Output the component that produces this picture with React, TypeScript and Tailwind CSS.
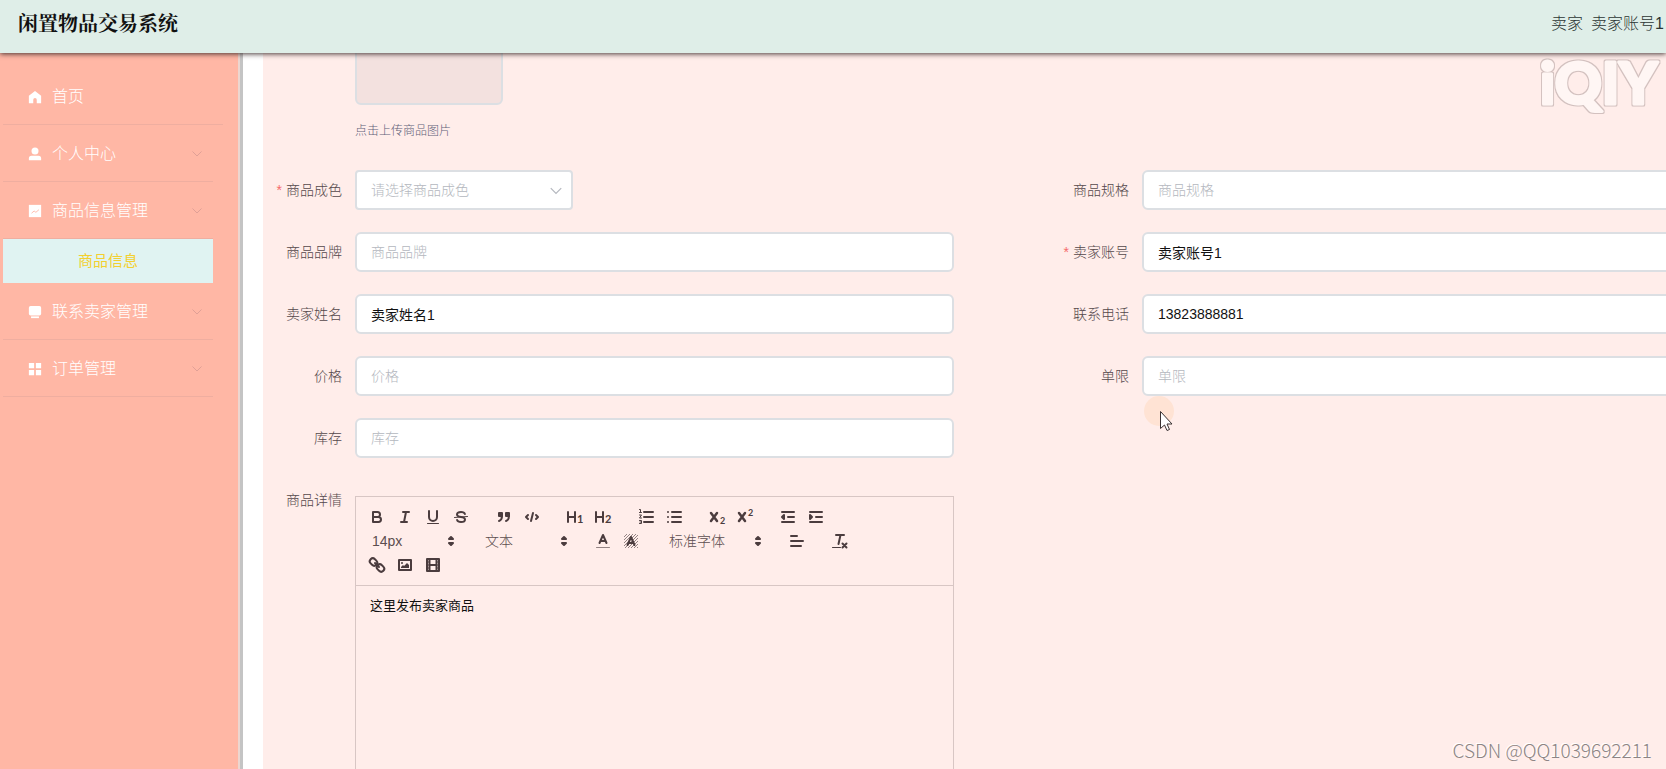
import React, { useState } from 'react';

interface MenuItem {
    label: string;
    icon: React.ReactNode;
    children?: string[];
    open?: boolean;
}

interface FieldProps {
    id: string;
    label: string;
    value?: string;
    required?: boolean;
}

const menu: MenuItem[] = [
    {
        label: '首页',
        icon: <path d="M8 1 1 6.500V15h5v-4a2 2 0 0 1 4 0v4h5V6.500z" />,
    },
    {
        label: '个人中心',
        icon: (
            <>
                <circle cx="8" cy="4.500" r="4" />
                <path d="M1 15v-2a3 3 0 0 1 3-3h8a3 3 0 0 1 3 3v2z" />
            </>
        ),
        children: [],
    },
    {
        label: '商品信息管理',
        icon: (
            <>
                <rect x="1" y="1" width="14" height="14" />
                <path d="M4 10.500 7 8l2 1.500 3.500-3" fill="none" stroke="#ffb7a5" />
            </>
        ),
        children: ['商品信息'],
        open: true,
    },
    {
        label: '联系卖家管理',
        icon: (
            <>
                <rect x="1" y="1" width="14" height="11" rx="2" />
                <path d="M3.500 13h9v2h-9z" />
            </>
        ),
        children: [],
    },
    {
        label: '订单管理',
        icon: <path d="M1 1h6v6H1zM9 1h6v6H9zM1 9h6v6H1zM9 9h6v6H9z" />,
        children: [],
    },
];

const Chevron = ({ className }: { className: string }) => (
    <svg viewBox="0 0 12 12" className={className} fill="none" stroke="currentColor">
        <path d="M1.500 3.500 6 8l4.500-4.500" />
    </svg>
);

const Sidebar = () => (
    <aside className="w-[243px] shrink-0 border-r-[3px] border-[#c4c4c4] bg-[#ffb7a5] pt-[15px] pl-[3px] shadow-[inset_-2px_0_0_#ecd6d0]">
        <nav>
            {menu.map((item) => (
                <div key={item.label} className={item.children ? 'w-[210px]' : 'w-[220px]'}>
                    <button className="flex h-[57px] w-full items-center border-b border-[#efaea0] pt-px pr-2.5 pl-[25px] text-base font-light text-white">
                        <svg viewBox="0 0 16 16" className="mr-2.5 h-3.5 w-3.5" fill="currentColor">
                            {item.icon}
                        </svg>
                        {item.label}
                        {item.children && <Chevron className="ml-auto h-3 w-3 text-[#e0a096]" />}
                    </button>
                    {item.open &&
                        item.children?.map((child) => (
                            <a
                                key={child}
                                href="#goods"
                                className="flex h-11 items-center justify-center bg-[#e0f3f2] text-[15px] text-[#f3d02f]"
                            >
                                {child}
                            </a>
                        ))}
                </div>
            ))}
        </nav>
    </aside>
);

const Label = ({ id, label, required }: FieldProps) => (
    <label
        htmlFor={id}
        className="flex h-10 w-20 shrink-0 items-center justify-end pr-[13px] text-sm font-light whitespace-nowrap text-[#54484a]"
    >
        {required && <span className="mr-1 text-[#f56c6c]">*</span>}
        {label}
    </label>
);

const Field = (props: FieldProps) => (
    <div className="flex pr-[108px]">
        <Label {...props} />
        <input
            id={props.id}
            defaultValue={props.value}
            placeholder={props.label}
            className="h-10 min-w-0 flex-1 rounded-md border-2 border-[#dcdfe3] bg-white px-3.5 text-sm text-[#111] placeholder:font-light placeholder:text-[#b4b7be]"
        />
    </div>
);

const Group = ({ children }: { children: React.ReactNode }) => (
    <div className="mr-[15px] flex h-6">{children}</div>
);

const Tool = ({ title, children }: { title: string; children: React.ReactNode }) => (
    <button type="button" title={title} className="flex h-6 w-7 items-center justify-center">
        <svg
            viewBox="0 0 18 18"
            className="h-[18px] w-[18px] overflow-visible"
            fill="none"
            stroke="currentColor"
            strokeWidth="2"
            strokeLinecap="round"
            strokeLinejoin="round"
        >
            {children}
        </svg>
    </button>
);

// letters inside toolbar icons
const Glyph = ({ x, y, size, children }: { x: number; y: number; size: number; children: string }) => (
    <text x={x} y={y} fontSize={size} fontWeight="700" fontFamily="Lato, sans-serif" fill="currentColor" stroke="none">
        {children}
    </text>
);

const Picker = ({ label, wide }: { label: string; wide?: boolean }) => (
    <div className={wide ? 'relative w-[108px]' : 'relative w-[98px]'}>
        <select
            aria-label={label}
            className="h-6 w-full appearance-none pl-[9px] text-sm font-light text-[#5c4d4f]"
        >
            <option>{label}</option>
        </select>
        <svg
            viewBox="0 0 18 18"
            className="pointer-events-none absolute top-[3px] right-px h-[18px] w-[18px]"
            fill="currentColor"
            stroke="currentColor"
            strokeWidth="2"
            strokeLinejoin="round"
        >
            <path d="M7 11 9 13 11 11zM7 7 9 5 11 7z" />
        </svg>
    </div>
);

const Toolbar = () => (
    <div className="flex flex-wrap border-b border-[#d8c6c4] px-[7px] py-2 text-[#4b3c3e]">
        <Group>
            <Tool title="加粗">
                <path d="M5 4h4.500a2.500 2.500 0 0 1 0 5H5zM5 9h5.500a2.500 2.500 0 0 1 0 5H5z" />
            </Tool>
            <Tool title="斜体">
                <path d="M7 4h6M5 14h6M8 14 10 4" />
            </Tool>
            <Tool title="下划线">
                <path d="M5 3v6a4 4 0 0 0 8 0V3" />
                <path d="M3.500 15.500h11" strokeWidth="1" />
            </Tool>
            <Tool title="删除线">
                <path d="M15.500 8.500l-13 1" strokeWidth="1" />
                <path d="M12.900 6C12.500 4.800 10.900 4 9 4 6.800 4 5 5.100 5 6.500c0 1.600 1.400 2.200 4 2.500s4 .9 4 2.500c0 1.400-1.800 2.500-4 2.500-1.900 0-3.500-.8-3.900-2" />
            </Tool>
        </Group>
        <Group>
            <Tool title="引用">
                <path d="M4 5h3v3H4zM11 5h3v3h-3z" fill="currentColor" />
                <path d="M7 8c0 4-3 5-3 5M14 8c0 4-3 5-3 5" />
            </Tool>
            <Tool title="代码">
                <path d="M5 7 3 9l2 2M13 7l2 2-2 2M10 5 8 13" />
            </Tool>
        </Group>
        <Group>
            <Tool title="标题1">
                <path d="M2 4v10M9 4v10M2 9h7" />
                <Glyph x={11} y={15} size={11}>1</Glyph>
            </Tool>
            <Tool title="标题2">
                <path d="M2 4v10M9 4v10M2 9h7" />
                <Glyph x={11} y={15} size={11}>2</Glyph>
            </Tool>
        </Group>
        <Group>
            <Tool title="有序列表">
                <path d="M7 4h9M7 9h9M7 14h9" />
                <path d="M2.500 1.500h1v3M2.500 4.500h2M2.500 7h2l-2 3h2M2.500 12.500h2v3h-2M3 14h1.500" strokeWidth="1" />
            </Tool>
            <Tool title="无序列表">
                <path d="M7 4h9M7 9h9M7 14h9M3 4h0M3 9h0M3 14h0" />
            </Tool>
        </Group>
        <Group>
            <Tool title="下标">
                <path d="m3 5 6 8M9 5l-6 8" strokeWidth="2.500" />
                <Glyph x={12} y={16} size={9}>2</Glyph>
            </Tool>
            <Tool title="上标">
                <path d="m3 5 6 8M9 5l-6 8" strokeWidth="2.500" />
                <Glyph x={12} y={8} size={9}>2</Glyph>
            </Tool>
        </Group>
        <Group>
            <Tool title="减少缩进">
                <path d="M3 4h12M3 14h12M9 9h6" />
                <path d="M5 7v4L3 9z" fill="currentColor" />
            </Tool>
            <Tool title="增加缩进">
                <path d="M3 4h12M3 14h12M9 9h6" />
                <path d="M3 7v4l2-2z" fill="currentColor" />
            </Tool>
        </Group>
        <Group>
            <Picker label="14px" />
        </Group>
        <Group>
            <Picker label="文本" />
        </Group>
        <Group>
            <Tool title="文字颜色">
                <path d="M2.500 15.500h13" strokeWidth="1" opacity="0.600" />
                <path d="M5.500 11 9 3l3.500 8M6.500 9h5" />
            </Tool>
            <Tool title="背景颜色">
                <path
                    d="M2 5l3-3M2 8l6-6M2 11l9-9M2 14 14 2M3 16 16 3M6 16 16 6M9 16l7-7M12 16l4-4M15 16l1-1"
                    strokeWidth="1"
                    strokeLinecap="butt"
                    opacity="0.600"
                />
                <path d="M5.500 13 9 5l3.500 8M6.500 11h5" />
            </Tool>
        </Group>
        <Group>
            <Picker label="标准字体" wide />
        </Group>
        <Group>
            <Tool title="对齐">
                <path d="M3 9h12M3 14h10M3 4h6" />
            </Tool>
        </Group>
        <Group>
            <Tool title="清除格式">
                <path d="M5 3h8M9.500 3 7.500 12" />
                <path d="M1.500 15.500h8" strokeWidth="1" />
                <path d="m11.500 11.500 4 4M15.500 11.500l-4 4" />
            </Tool>
        </Group>
        <Group>
            <Tool title="链接">
                <rect x="1.500" y="3" width="8" height="6" rx="3" transform="rotate(45 5.500 6)" />
                <rect x="8.500" y="9" width="8" height="6" rx="3" transform="rotate(45 12.500 12)" />
                <path d="m7 7 4 4" />
            </Tool>
            <Tool title="图片">
                <rect x="3" y="4" width="12" height="10" />
                <circle cx="6" cy="7" r="1" fill="currentColor" stroke="none" />
                <path d="M5 12v-1l2-2 1 1 3-3 2 2v3z" fill="currentColor" stroke="none" />
            </Tool>
            <Tool title="视频">
                <rect x="3" y="3" width="12" height="12" />
                <path d="M5.500 3v12M12.500 3v12M6 9h6" />
                <path d="M3 6h2M3 9h2M3 12h2M13 6h2M13 9h2M13 12h2" strokeWidth="1" />
            </Tool>
        </Group>
    </div>
);

const GoodsForm = () => {
    const [condition, setCondition] = useState('');
    const [detail, setDetail] = useState('这里发布卖家商品');

    return (
        <form className="-mt-24 w-[1574px] min-w-full">
            <div className="pl-20">
                <button
                    type="button"
                    aria-label="上传商品图片"
                    className="block h-[148px] w-[148px] rounded-md border-2 border-[#dcdfe3] bg-[#f3e1df]"
                />
                <p className="mt-[17px] mb-[30px] text-xs leading-[18px] font-light text-[#606078]">点击上传商品图片</p>
            </div>
            <div className="grid grid-cols-2 gap-y-[22px]">
                <div className="flex">
                    <Label id="condition" label="商品成色" required />
                    <div className="relative w-[218px]">
                        <select
                            id="condition"
                            value={condition}
                            onChange={(e) => setCondition(e.target.value)}
                            className="h-10 w-full appearance-none rounded border-2 border-[#dcdfe3] bg-white px-3.5 text-sm font-light text-[#b4b7be]"
                        >
                            <option value="">请选择商品成色</option>
                            <option>全新</option>
                        </select>
                        <Chevron className="pointer-events-none absolute top-3.5 right-2.5 h-3.5 w-3.5 text-[#b4b7be]" />
                    </div>
                </div>
                <Field id="spec" label="商品规格" />
                <Field id="brand" label="商品品牌" />
                <Field id="account" label="卖家账号" value="卖家账号1" required />
                <Field id="seller" label="卖家姓名" value="卖家姓名1" />
                <Field id="phone" label="联系电话" value="13823888881" />
                <Field id="price" label="价格" />
                <Field id="limit" label="单限" />
                <Field id="stock" label="库存" />
                <div className="col-start-1 flex pr-[108px]">
                    <Label id="detail" label="商品详情" />
                    <div className="mt-4 min-w-0 flex-1 border border-[#d8c6c4]">
                        <Toolbar />
                        <textarea
                            id="detail"
                            value={detail}
                            onChange={(e) => setDetail(e.target.value)}
                            className="block h-[300px] w-full resize-none px-3.5 py-[11px] text-[13px] leading-[18px] text-[#111]"
                        />
                    </div>
                </div>
            </div>
        </form>
    );
};

export default function App() {
    return (
        <div className="relative flex h-screen flex-col overflow-hidden bg-white font-['Liberation_Sans','Noto_Sans_CJK_SC',sans-serif]">
            <header className="z-10 flex h-[53px] shrink-0 items-center justify-between bg-[#dfeee8] pr-0.5 pb-1.5 pl-[18px] shadow-[0_1px_5px_rgba(50,35,35,0.9)]">
                <h1 className="font-['Liberation_Serif','Noto_Serif_CJK_SC','Noto_Sans_CJK_SC',serif] text-xl font-bold text-[#111]">
                    闲置物品交易系统
                </h1>
                <div className="flex gap-2 text-base font-light text-[#2c3634]">
                    <span>卖家</span>
                    <span>卖家账号1</span>
                </div>
            </header>
            <div className="flex min-h-0 flex-1">
                <Sidebar />
                <main className="ml-5 min-w-0 flex-1 overflow-hidden bg-[#ffedea] pl-3">
                    <GoodsForm />
                </main>
            </div>

            {/* the outline is grown round the letters, under their fill */}
            <svg
                viewBox="0 0 128 72"
                className="pointer-events-none absolute top-[52px] right-0 h-[72px] w-32 overflow-visible"
            >
                <defs>
                    <filter id="outline" x="-10%" y="-10%" width="120%" height="120%">
                        <feMorphology in="SourceAlpha" operator="dilate" radius="1" result="wide" />
                        <feFlood floodColor="#d3c1bf" />
                        <feComposite in2="wide" operator="in" result="edge" />
                        <feMerge>
                            <feMergeNode in="edge" />
                            <feMergeNode in="SourceGraphic" />
                        </feMerge>
                    </filter>
                </defs>
                <text
                    x="2"
                    y="52"
                    fontFamily="Lato, sans-serif"
                    fontSize="58"
                    fontWeight="900"
                    fill="#fff6f4"
                    stroke="#fff6f4"
                    strokeWidth="3"
                    strokeLinejoin="round"
                    filter="url(#outline)"
                >
                    iQIY
                </text>
            </svg>
            <div className="pointer-events-none absolute right-[14px] bottom-[5px] font-['Noto_Sans_CJK_SC',sans-serif] text-[19px] font-light text-[#8d8484] [text-shadow:-1px_-1px_0_#fff]">
                CSDN @QQ1039692211
            </div>
            <svg
                viewBox="0 0 30 48"
                className="pointer-events-none absolute top-[396px] left-[1144px] h-12 w-[30px]"
            >
                <circle cx="15" cy="15" r="15" fill="#ffe3d4" />
                <path
                    d="M16.500 15.500v17l4-3.500 2.500 5.500 2.500-1-2.500-5.500h5z"
                    fill="#fff"
                    stroke="#3b3232"
                    strokeLinejoin="round"
                />
            </svg>
        </div>
    );
}
